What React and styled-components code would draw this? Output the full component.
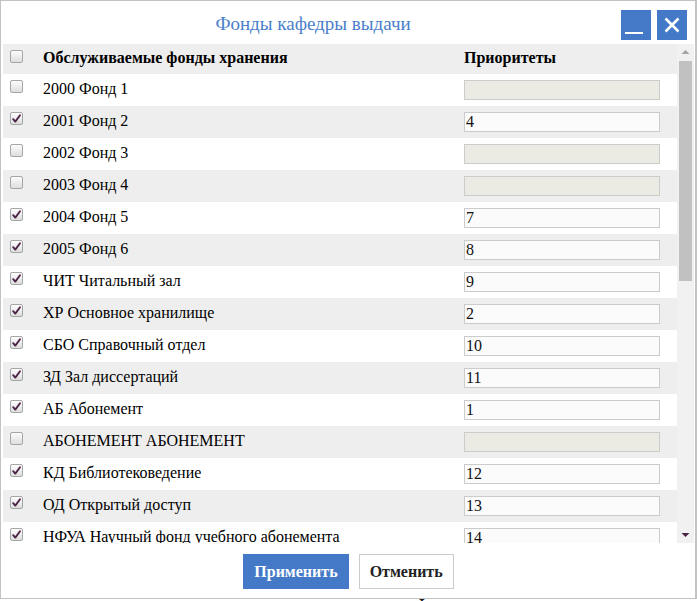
import React, { useState, useRef, useEffect } from 'react';
import styled, { createGlobalStyle } from 'styled-components';

const GlobalStyle = createGlobalStyle`
  html, body {
    margin: 0;
    padding: 0;
    background: #fff;
    font-family: "Liberation Serif", "Times New Roman", serif;
  }
`;

const initialFunds = [
  { code: '2000', name: 'Фонд 1', on: false, prio: '' },
  { code: '2001', name: 'Фонд 2', on: true, prio: '4' },
  { code: '2002', name: 'Фонд 3', on: false, prio: '' },
  { code: '2003', name: 'Фонд 4', on: false, prio: '' },
  { code: '2004', name: 'Фонд 5', on: true, prio: '7' },
  { code: '2005', name: 'Фонд 6', on: true, prio: '8' },
  { code: 'ЧИТ', name: 'Читальный зал', on: true, prio: '9' },
  { code: 'ХР', name: 'Основное хранилище', on: true, prio: '2' },
  { code: 'СБО', name: 'Справочный отдел', on: true, prio: '10' },
  { code: 'ЗД', name: 'Зал диссертаций', on: true, prio: '11' },
  { code: 'АБ', name: 'Абонемент', on: true, prio: '1' },
  { code: 'АБОНЕМЕНТ', name: 'АБОНЕМЕНТ', on: false, prio: '' },
  { code: 'КД', name: 'Библиотековедение', on: true, prio: '12' },
  { code: 'ОД', name: 'Открытый доступ', on: true, prio: '13' },
  { code: 'НФУА', name: 'Научный фонд учебного абонемента', on: true, prio: '14' },
  { code: 'НФ', name: 'Научный фонд', on: true, prio: '15' },
  { code: 'РК', name: 'Редкая книга', on: false, prio: '' },
  { code: 'ОИЛ', name: 'Отдел иностранной литературы', on: true, prio: '16' },
  { code: 'ПЕР', name: 'Периодика', on: true, prio: '17' },
  { code: 'ХЛ', name: 'Художественная литература', on: true, prio: '18' },
  { code: 'МО', name: 'Методический отдел', on: false, prio: '' },
  { code: 'ЭИ', name: 'Электронные издания', on: true, prio: '19' },
  { code: 'ОФ', name: 'Обменный фонд', on: false, prio: '' },
  { code: 'КХ', name: 'Книгохранение', on: true, prio: '20' },
  { code: 'ФЛ', name: 'Филиал 1', on: true, prio: '21' },
  { code: 'ФЛ2', name: 'Филиал 2', on: true, prio: '22' },
  { code: 'АРХ', name: 'Архив', on: false, prio: '' },
  { code: 'УЧ', name: 'Учебный фонд', on: true, prio: '23' },
  { code: 'ДЛ', name: 'Детская литература', on: true, prio: '24' },
  { code: 'КР', name: 'Краеведение', on: true, prio: '25' },
  { code: 'НТ', name: 'Нотный фонд', on: false, prio: '' },
  { code: 'ЛП', name: 'Литература на перевод', on: true, prio: '26' },
];

const TRACK_PAD = 17;

function Check({ checked, onClick }) {
  return (
    <CheckBox onClick={onClick}>
      {checked && (
        <svg width="9" height="9" viewBox="0 0 9 9">
          <path d="M1.2 5.2 L3.3 7.6 L8 1.3" fill="none" stroke="#4b2548" strokeWidth="1.9" strokeLinecap="round" strokeLinejoin="round" />
        </svg>
      )}
    </CheckBox>
  );
}

function App() {
  const [funds, setFunds] = useState(initialFunds);
  const [thumb, setThumb] = useState({ top: 0, height: 220 });
  const listRef = useRef(null);

  const measure = () => {
    const el = listRef.current;
    if (!el) return;
    const track = el.clientHeight - TRACK_PAD * 2;
    const height = Math.max(20, (track * el.clientHeight) / el.scrollHeight);
    const max = el.scrollHeight - el.clientHeight;
    const top = max > 0 ? ((track - height) * el.scrollTop) / max : 0;
    setThumb({ top, height });
  };

  useEffect(measure, [funds.length]);

  const toggle = (i) => {
    setFunds(funds.map((f, j) => (j === i ? { ...f, on: !f.on } : f)));
  };

  const setPrio = (i, v) => {
    setFunds(funds.map((f, j) => (j === i ? { ...f, prio: v } : f)));
  };

  return (
    <>
      <GlobalStyle />
      <Page>
        <PageText>Фонды</PageText>
      </Page>
      <Dialog>
        <TitleBar>
          <Title>Фонды кафедры выдачи</Title>
          <WinButtons>
            <WinButton type="button" aria-label="Свернуть">
              <svg width="30" height="30" viewBox="0 0 30 30">
                <rect x="4" y="22" width="18" height="2" fill="#fff" />
              </svg>
            </WinButton>
            <WinButton type="button" aria-label="Закрыть">
              <svg width="30" height="30" viewBox="0 0 30 30">
                <path d="M8.5 8.5 L21.5 21.5 M21.5 8.5 L8.5 21.5" stroke="#fff" strokeWidth="2.6" />
              </svg>
            </WinButton>
          </WinButtons>
        </TitleBar>

        <Body>
          <List ref={listRef} onScroll={measure}>
            <HeadRow>
              <CheckCell><Check checked={false} /></CheckCell>
              <NameCell>Обслуживаемые фонды хранения</NameCell>
              <PrioCell>Приоритеты</PrioCell>
            </HeadRow>
            {funds.map((f, i) => (
              <Row key={f.code + i} $striped={i % 2 === 1}>
                <CheckCell><Check checked={f.on} onClick={() => toggle(i)} /></CheckCell>
                <NameCell>{f.code} {f.name}</NameCell>
                <PrioCell>
                  <PrioInput
                    value={f.prio}
                    disabled={!f.on}
                    onChange={(e) => setPrio(i, e.target.value)}
                  />
                </PrioCell>
              </Row>
            ))}
          </List>
          <Rail>
            <RailArrow>
              <svg width="17" height="17" viewBox="0 0 17 17">
                <path d="M4.5 10 L8.5 6 L12.5 10 Z" fill="#a3a3a3" />
              </svg>
            </RailArrow>
            <Track>
              <Thumb style={{ top: thumb.top, height: thumb.height }} />
            </Track>
            <RailArrow>
              <svg width="17" height="17" viewBox="0 0 17 17">
                <path d="M4.5 7 L8.5 11 L12.5 7 Z" fill="#4b2548" />
              </svg>
            </RailArrow>
          </Rail>
        </Body>

        <Footer>
          <ActionButton type="button" $primary>Применить</ActionButton>
          <ActionButton type="button">Отменить</ActionButton>
        </Footer>
      </Dialog>
    </>
  );
}

export default App;

const Page = styled.div`
  height: 601px;
  display: flex;
  align-items: flex-end;
  box-sizing: border-box;
  overflow: hidden;
`;

const PageText = styled.div`
  font-size: 16px;
  color: #222;
  line-height: 16px;
  margin: 0 0 -12px 415px;
  font-weight: bold;
`;

const Dialog = styled.div`
  position: absolute;
  top: 0;
  left: 0;
  width: 697px;
  height: 599px;
  box-sizing: border-box;
  background: #fff;
  border: 1px solid #c3c3c3;
  border-right-width: 2px;
  display: flex;
  flex-direction: column;
  padding: 0 1px 0 2px;
`;

const TitleBar = styled.div`
  height: 43px;
  flex: none;
  display: flex;
  align-items: flex-start;
`;

const Title = styled.h2`
  margin: 0;
  width: 620px;
  text-align: center;
  font-weight: normal;
  font-size: 19px;
  line-height: 45px;
  color: #4a7fcb;
`;

const WinButtons = styled.div`
  display: flex;
  gap: 6px;
  padding-top: 9px;
  margin-left: -2px;
`;

const WinButton = styled.button`
  width: 30px;
  height: 30px;
  padding: 0;
  border: none;
  background: #4479c7;
  display: block;
  cursor: pointer;
  svg { display: block; }
`;

const Body = styled.div`
  height: 499px;
  flex: none;
  display: flex;
`;

const List = styled.div`
  flex: 1;
  overflow-y: scroll;
  overflow-x: hidden;
  scrollbar-width: none;
  &::-webkit-scrollbar { display: none; }
`;

const Rail = styled.div`
  width: 17px;
  flex: none;
  background: #f1f1f1;
  display: flex;
  flex-direction: column;
`;

const RailArrow = styled.div`
  height: 17px;
  flex: none;
  svg { display: block; }
`;

const Track = styled.div`
  flex: 1;
  position: relative;
`;

const Thumb = styled.div`
  position: absolute;
  left: 2px;
  right: 2px;
  background: #c1c1c1;
`;

const Row = styled.div`
  display: flex;
  align-items: center;
  height: 32px;
  background: ${(p) => (p.$striped ? '#eeeeee' : '#fff')};
`;

const HeadRow = styled(Row)`
  height: 30px;
  background: #eeeeee;
  font-weight: bold;
`;

const CheckCell = styled.div`
  width: 40px;
  flex: none;
  display: flex;
  padding-left: 7px;
  box-sizing: border-box;
  align-self: stretch;
  padding-top: 6px;
`;

const CheckBox = styled.span`
  width: 11px;
  height: 11px;
  border: 1px solid #a6a6a6;
  border-radius: 2px;
  background: linear-gradient(#fcfcfc, #dedede);
  display: flex;
  align-items: center;
  justify-content: center;
  cursor: pointer;
`;

const NameCell = styled.div`
  width: 421px;
  flex: none;
  font-size: 16px;
  color: #000;
  white-space: nowrap;
  padding-bottom: 2px;
`;

const PrioCell = styled.div`
  flex: 1;
  font-size: 16px;
  color: #000;
  padding-bottom: 2px;
`;

const PrioInput = styled.input`
  display: block;
  width: 196px;
  height: 20px;
  box-sizing: border-box;
  border: 1px solid #cccccc;
  background: #fbfbfb;
  font-family: "Liberation Serif", "Times New Roman", serif;
  font-size: 16px;
  color: #111;
  padding: 0 1px;
  margin-top: 1px;
  outline: none;
  &:disabled {
    background: #ebebe4;
  }
`;

const Footer = styled.div`
  flex: 1;
  display: flex;
  justify-content: center;
  gap: 10px;
  padding-top: 11px;
  box-sizing: border-box;
`;

const ActionButton = styled.button`
  height: 35px;
  padding: 0 10px;
  font-family: "Liberation Serif", "Times New Roman", serif;
  font-weight: bold;
  font-size: 16px;
  cursor: pointer;
  color: ${(p) => (p.$primary ? '#fff' : '#222')};
  background: ${(p) => (p.$primary ? '#4479c7' : '#fff')};
  border: 1px solid ${(p) => (p.$primary ? '#4479c7' : '#cccccc')};
`;
